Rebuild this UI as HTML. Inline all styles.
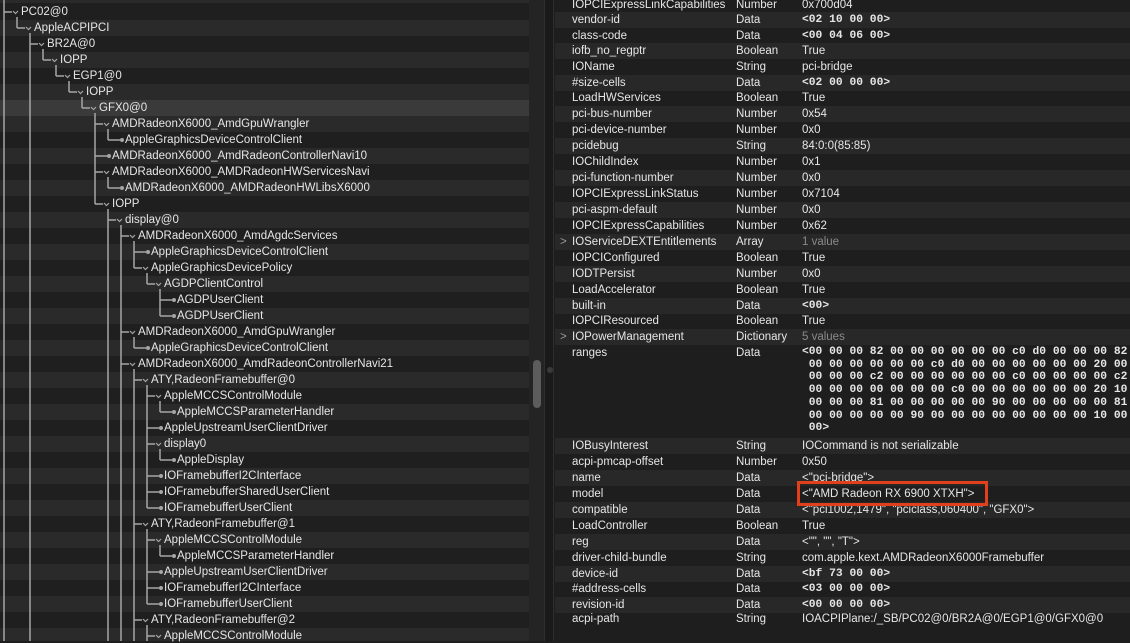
<!DOCTYPE html>
<html><head><meta charset="utf-8"><style>
*{margin:0;padding:0;box-sizing:border-box}
body{width:1130px;height:641px;overflow:hidden;background:#1e1e1e;font-family:"Liberation Sans",sans-serif;font-size:11.5px;color:#e6e6e6;position:relative}
#left{position:absolute;left:0;top:0;width:529px;height:641px;background:repeating-linear-gradient(#1f1f1f 0 16px,#2a2a2a 16px 32px);background-position:0 4px}
.t{position:absolute;white-space:nowrap;line-height:14px}
#track{position:absolute;left:529px;top:0;width:15px;height:641px;background:#242424}
#thumb{position:absolute;left:533px;top:360px;width:8px;height:48px;border-radius:4px;background:#5c5c5c}
#div{position:absolute;left:544px;top:0;width:10px;height:641px;background:#1a1a1a;border-left:1px solid #2e2e2e;border-right:1px solid #2e2e2e}
#right{position:absolute;left:555px;top:0;width:575px;height:641px;background:#1e1e1e}
.s{position:absolute;left:0;width:575px;height:16px;background:#282828}
.n{left:17px}.y{left:181px}.v{left:247px}
.m{font-family:"Liberation Mono",monospace;font-weight:bold;font-size:11.3px}
.g{color:#8a8a8a}
.c{left:5px;color:#9a9a9a}
</style></head><body>
<div id="left">
<div style="position:absolute;left:0;top:100px;width:529px;height:16px;background:#3a3a3a"></div>
<svg width="529" height="641" style="position:absolute;left:0;top:0" fill="none" stroke="#a6a6a6" stroke-width="1.5">
<path d="M4 0V641M17 17V28M30 33V641M43 49V60M56 65V76M69 81V92M82 97V108M95 113V204M108 129V140M108 177V188M108 209V641M121 225V641M134 241V268M134 337V348M134 369V641M147 273V284M147 385V508M147 529V604M147 625V641M160 289V316M160 401V412M160 449V460M160 545V556"/>
<path d="M4 12h8M17 28h8M30 44h8M43 60h8M56 76h8M69 92h8M82 108h8M95 124h8M95 172h8M95 204h8M108 220h8M121 236h8M134 268h8M147 284h8M121 332h8M121 364h8M134 380h8M147 396h8M147 444h8M134 524h8M147 540h8M134 620h8M147 636h8"/>
<path stroke-width="1.2" d="M13 11l2.5 2.5l2.5-2.5M26 27l2.5 2.5l2.5-2.5M39 43l2.5 2.5l2.5-2.5M52 59l2.5 2.5l2.5-2.5M65 75l2.5 2.5l2.5-2.5M78 91l2.5 2.5l2.5-2.5M91 107l2.5 2.5l2.5-2.5M104 123l2.5 2.5l2.5-2.5M104 171l2.5 2.5l2.5-2.5M104 203l2.5 2.5l2.5-2.5M117 219l2.5 2.5l2.5-2.5M130 235l2.5 2.5l2.5-2.5M143 267l2.5 2.5l2.5-2.5M156 283l2.5 2.5l2.5-2.5M130 331l2.5 2.5l2.5-2.5M130 363l2.5 2.5l2.5-2.5M143 379l2.5 2.5l2.5-2.5M156 395l2.5 2.5l2.5-2.5M156 443l2.5 2.5l2.5-2.5M143 523l2.5 2.5l2.5-2.5M156 539l2.5 2.5l2.5-2.5M143 619l2.5 2.5l2.5-2.5M156 635l2.5 2.5l2.5-2.5"/>
<path d="M108 140h12M95 156h12M108 188h12M134 252h12M160 300h12M160 316h12M134 348h12M160 412h12M147 428h12M160 460h12M147 476h12M147 492h12M147 508h12M160 556h12M147 572h12M147 588h12M147 604h12"/>
<g fill="#a6a6a6" stroke="none">
<circle cx="122" cy="140" r="2"/><circle cx="109" cy="156" r="2"/><circle cx="122" cy="188" r="2"/><circle cx="148" cy="252" r="2"/><circle cx="174" cy="300" r="2"/><circle cx="174" cy="316" r="2"/><circle cx="148" cy="348" r="2"/><circle cx="174" cy="412" r="2"/><circle cx="161" cy="428" r="2"/><circle cx="174" cy="460" r="2"/><circle cx="161" cy="476" r="2"/><circle cx="161" cy="492" r="2"/><circle cx="161" cy="508" r="2"/><circle cx="174" cy="556" r="2"/><circle cx="161" cy="572" r="2"/><circle cx="161" cy="588" r="2"/><circle cx="161" cy="604" r="2"/>
</g>
</svg>
<div class="t" style="top:5px;left:21px">PC02@0</div>
<div class="t" style="top:21px;left:34px">AppleACPIPCI</div>
<div class="t" style="top:37px;left:47px">BR2A@0</div>
<div class="t" style="top:53px;left:60px">IOPP</div>
<div class="t" style="top:69px;left:73px">EGP1@0</div>
<div class="t" style="top:85px;left:86px">IOPP</div>
<div class="t" style="top:101px;left:99px">GFX0@0</div>
<div class="t" style="top:117px;left:112px">AMDRadeonX6000_AmdGpuWrangler</div>
<div class="t" style="top:133px;left:125px">AppleGraphicsDeviceControlClient</div>
<div class="t" style="top:149px;left:112px">AMDRadeonX6000_AmdRadeonControllerNavi10</div>
<div class="t" style="top:165px;left:112px">AMDRadeonX6000_AMDRadeonHWServicesNavi</div>
<div class="t" style="top:181px;left:125px">AMDRadeonX6000_AMDRadeonHWLibsX6000</div>
<div class="t" style="top:197px;left:112px">IOPP</div>
<div class="t" style="top:213px;left:125px">display@0</div>
<div class="t" style="top:229px;left:138px">AMDRadeonX6000_AmdAgdcServices</div>
<div class="t" style="top:245px;left:151px">AppleGraphicsDeviceControlClient</div>
<div class="t" style="top:261px;left:151px">AppleGraphicsDevicePolicy</div>
<div class="t" style="top:277px;left:164px">AGDPClientControl</div>
<div class="t" style="top:293px;left:177px">AGDPUserClient</div>
<div class="t" style="top:309px;left:177px">AGDPUserClient</div>
<div class="t" style="top:325px;left:138px">AMDRadeonX6000_AmdGpuWrangler</div>
<div class="t" style="top:341px;left:151px">AppleGraphicsDeviceControlClient</div>
<div class="t" style="top:357px;left:138px">AMDRadeonX6000_AmdRadeonControllerNavi21</div>
<div class="t" style="top:373px;left:151px">ATY,RadeonFramebuffer@0</div>
<div class="t" style="top:389px;left:164px">AppleMCCSControlModule</div>
<div class="t" style="top:405px;left:177px">AppleMCCSParameterHandler</div>
<div class="t" style="top:421px;left:164px">AppleUpstreamUserClientDriver</div>
<div class="t" style="top:437px;left:164px">display0</div>
<div class="t" style="top:453px;left:177px">AppleDisplay</div>
<div class="t" style="top:469px;left:164px">IOFramebufferI2CInterface</div>
<div class="t" style="top:485px;left:164px">IOFramebufferSharedUserClient</div>
<div class="t" style="top:501px;left:164px">IOFramebufferUserClient</div>
<div class="t" style="top:517px;left:151px">ATY,RadeonFramebuffer@1</div>
<div class="t" style="top:533px;left:164px">AppleMCCSControlModule</div>
<div class="t" style="top:549px;left:177px">AppleMCCSParameterHandler</div>
<div class="t" style="top:565px;left:164px">AppleUpstreamUserClientDriver</div>
<div class="t" style="top:581px;left:164px">IOFramebufferI2CInterface</div>
<div class="t" style="top:597px;left:164px">IOFramebufferUserClient</div>
<div class="t" style="top:613px;left:151px">ATY,RadeonFramebuffer@2</div>
<div class="t" style="top:629px;left:164px">AppleMCCSControlModule</div>
</div>
<div id="track"></div><div id="thumb"></div>
<div id="div"><div style="position:absolute;left:2px;top:367px;width:6px;height:6px;border-radius:3px;background:#3a3a3a"></div></div>
<div id="right">
<div class="s" style="top:12px"></div><div class="s" style="top:43px"></div><div class="s" style="top:75px"></div><div class="s" style="top:106px"></div><div class="s" style="top:138px"></div><div class="s" style="top:170px"></div><div class="s" style="top:202px"></div><div class="s" style="top:234px"></div><div class="s" style="top:266px"></div><div class="s" style="top:298px"></div><div class="s" style="top:329px"></div><div class="s" style="top:438px"></div><div class="s" style="top:470px"></div><div class="s" style="top:502px"></div><div class="s" style="top:534px"></div><div class="s" style="top:566px"></div><div class="s" style="top:597px"></div>
<div class="t n" style="top:-2px">IOPCIExpressLinkCapabilities</div><div class="t y" style="top:-2px">Number</div><div class="t v" style="top:-2px">0x700d04</div>
<div class="t n" style="top:13px">vendor-id</div><div class="t y" style="top:13px">Data</div><div class="t v m" style="top:13px">&lt;02 10 00 00&gt;</div>
<div class="t n" style="top:29px">class-code</div><div class="t y" style="top:29px">Data</div><div class="t v m" style="top:29px">&lt;00 04 06 00&gt;</div>
<div class="t n" style="top:44px">iofb_no_regptr</div><div class="t y" style="top:44px">Boolean</div><div class="t v" style="top:44px">True</div>
<div class="t n" style="top:60px">IOName</div><div class="t y" style="top:60px">String</div><div class="t v" style="top:60px">pci-bridge</div>
<div class="t n" style="top:76px">#size-cells</div><div class="t y" style="top:76px">Data</div><div class="t v m" style="top:76px">&lt;02 00 00 00&gt;</div>
<div class="t n" style="top:91px">LoadHWServices</div><div class="t y" style="top:91px">Boolean</div><div class="t v" style="top:91px">True</div>
<div class="t n" style="top:107px">pci-bus-number</div><div class="t y" style="top:107px">Number</div><div class="t v" style="top:107px">0x54</div>
<div class="t n" style="top:123px">pci-device-number</div><div class="t y" style="top:123px">Number</div><div class="t v" style="top:123px">0x0</div>
<div class="t n" style="top:139px">pcidebug</div><div class="t y" style="top:139px">String</div><div class="t v" style="top:139px">84:0:0(85:85)</div>
<div class="t n" style="top:155px">IOChildIndex</div><div class="t y" style="top:155px">Number</div><div class="t v" style="top:155px">0x1</div>
<div class="t n" style="top:171px">pci-function-number</div><div class="t y" style="top:171px">Number</div><div class="t v" style="top:171px">0x0</div>
<div class="t n" style="top:187px">IOPCIExpressLinkStatus</div><div class="t y" style="top:187px">Number</div><div class="t v" style="top:187px">0x7104</div>
<div class="t n" style="top:203px">pci-aspm-default</div><div class="t y" style="top:203px">Number</div><div class="t v" style="top:203px">0x0</div>
<div class="t n" style="top:219px">IOPCIExpressCapabilities</div><div class="t y" style="top:219px">Number</div><div class="t v" style="top:219px">0x62</div>
<div class="t c" style="top:235px">&gt;</div><div class="t n" style="top:235px">IOServiceDEXTEntitlements</div><div class="t y" style="top:235px">Array</div><div class="t v g" style="top:235px">1 value</div>
<div class="t n" style="top:251px">IOPCIConfigured</div><div class="t y" style="top:251px">Boolean</div><div class="t v" style="top:251px">True</div>
<div class="t n" style="top:267px">IODTPersist</div><div class="t y" style="top:267px">Number</div><div class="t v" style="top:267px">0x0</div>
<div class="t n" style="top:283px">LoadAccelerator</div><div class="t y" style="top:283px">Boolean</div><div class="t v" style="top:283px">True</div>
<div class="t n" style="top:299px">built-in</div><div class="t y" style="top:299px">Data</div><div class="t v m" style="top:299px">&lt;00&gt;</div>
<div class="t n" style="top:314px">IOPCIResourced</div><div class="t y" style="top:314px">Boolean</div><div class="t v" style="top:314px">True</div>
<div class="t c" style="top:330px">&gt;</div><div class="t n" style="top:330px">IOPowerManagement</div><div class="t y" style="top:330px">Dictionary</div><div class="t v g" style="top:330px">5 values</div>
<div class="t n" style="top:346px">ranges</div><div class="t y" style="top:346px">Data</div>
<div class="t v m" style="top:346px;line-height:12.7px;white-space:pre">&lt;00 00 00 82 00 00 00 00 00 00 c0 d0 00 00 00 82
 00 00 00 00 00 00 c0 d0 00 00 00 00 00 00 20 00
 00 00 00 c2 00 00 00 00 00 00 c0 00 00 00 00 c2
 00 00 00 00 00 00 00 c0 00 00 00 00 00 00 20 10
 00 00 00 81 00 00 00 00 00 90 00 00 00 00 00 81
 00 00 00 00 00 90 00 00 00 00 00 00 00 00 10 00
 00&gt;</div>
<div class="t n" style="top:439px">IOBusyInterest</div><div class="t y" style="top:439px">String</div><div class="t v" style="top:439px">IOCommand is not serializable</div>
<div class="t n" style="top:455px">acpi-pmcap-offset</div><div class="t y" style="top:455px">Number</div><div class="t v" style="top:455px">0x50</div>
<div class="t n" style="top:471px">name</div><div class="t y" style="top:471px">Data</div><div class="t v" style="top:471px">&lt;"pci-bridge"&gt;</div>
<div class="t n" style="top:487px">model</div><div class="t y" style="top:487px">Data</div><div class="t v" style="top:487px">&lt;"AMD Radeon RX 6900 XTXH"&gt;</div>
<div class="t n" style="top:503px">compatible</div><div class="t y" style="top:503px">Data</div><div class="t v" style="top:503px">&lt;"pci1002,1479", "pciclass,060400", "GFX0"&gt;</div>
<div class="t n" style="top:519px">LoadController</div><div class="t y" style="top:519px">Boolean</div><div class="t v" style="top:519px">True</div>
<div class="t n" style="top:535px">reg</div><div class="t y" style="top:535px">Data</div><div class="t v" style="top:535px">&lt;"", "", "T"&gt;</div>
<div class="t n" style="top:551px">driver-child-bundle</div><div class="t y" style="top:551px">String</div><div class="t v" style="top:551px">com.apple.kext.AMDRadeonX6000Framebuffer</div>
<div class="t n" style="top:567px">device-id</div><div class="t y" style="top:567px">Data</div><div class="t v m" style="top:567px">&lt;bf 73 00 00&gt;</div>
<div class="t n" style="top:582px">#address-cells</div><div class="t y" style="top:582px">Data</div><div class="t v m" style="top:582px">&lt;03 00 00 00&gt;</div>
<div class="t n" style="top:598px">revision-id</div><div class="t y" style="top:598px">Data</div><div class="t v m" style="top:598px">&lt;00 00 00 00&gt;</div>
<div class="t n" style="top:612px">acpi-path</div><div class="t y" style="top:612px">String</div><div class="t v" style="top:612px">IOACPIPlane:/_SB/PC02@0/BR2A@0/EGP1@0/GFX0@0</div>
<div style="position:absolute;left:242px;top:481px;width:191px;height:25px;border:3px solid #e2401c"></div>
</div>
</body></html>
